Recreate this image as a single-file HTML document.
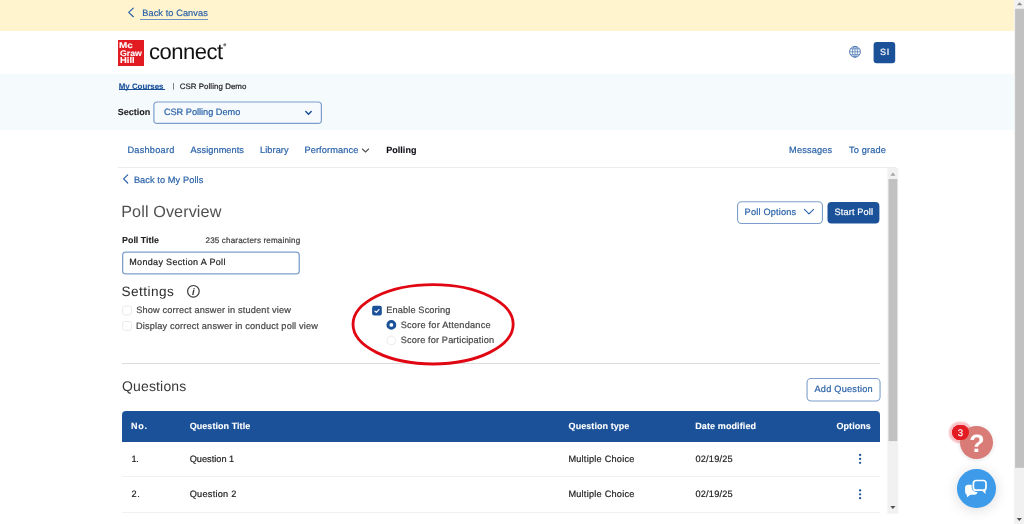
<!DOCTYPE html>
<html lang="en">
<head>
<meta charset="utf-8">
<title>Poll Overview - Connect</title>
<style>
html,body{margin:0;padding:0}
body{width:1024px;height:524px;overflow:hidden;background:#fff;position:relative;
  font-family:"Liberation Sans",Arial,sans-serif;-webkit-font-smoothing:antialiased;text-rendering:geometricPrecision;will-change:transform}
.abs,.t,svg.i{position:absolute}
.t{line-height:1;white-space:nowrap;margin:0;padding:0;font-weight:400;-webkit-text-stroke:0.2px currentColor}
a.t{text-decoration:none}
h1.t,h2.t,#t_con{font-weight:400;-webkit-text-stroke:0}
svg.i{overflow:visible}

/* page bands */
#banner{left:0;top:0;width:1014px;height:31px;background:#fff4ce}
#subhead{left:0;top:74px;width:1014px;height:56px;background:#f5fafd}
#back_ul{left:140px;top:19px;width:68px;height:1px;background:#6b93c2}
#myc_ul{left:119px;top:89px;width:46px;height:1px;background:#1a5199}

/* logo */
#mh{left:118px;top:40px;width:26px;height:26px;background:#e21b23}

/* rules */
#navline{left:118px;top:167px;width:778px;height:1px;background:#ececec}
#hr{left:122px;top:363px;width:758px;height:1px;background:#dcdcdc}

/* table */
#thead{left:122px;top:411px;width:758px;height:31px;background:#1a5199;border-radius:4px 4px 0 0}
.sep{left:122px;width:758px;height:1px;background:#eff1f4}
#sep1{top:476px}
#sep2{top:512px}

/* floating help */
#help{left:959.5px;top:425.7px;width:33.7px;height:33.7px;border-radius:50%;background:#d97b76;box-shadow:0 1px 4px rgba(0,0,0,.12)}
#badge_halo{left:951.6px;top:424.7px;width:17.8px;height:15.4px;border-radius:7.7px;background:#e31b23;box-shadow:0 0 1.5px 3.2px rgba(232,60,70,.32)}
#badge{left:951.6px;top:424.7px;width:17.8px;height:15.4px;border-radius:7.7px;background:#e31b23}
#chat{left:957.1px;top:469.1px;width:38.5px;height:38.5px;border-radius:50%;background:#3d9be9;box-shadow:0 2px 14px rgba(0,0,0,.14)}

#t_back{left:142.28px;top:9.00px;font-size:9.2px;letter-spacing:0.092px;color:#2a62a8}
#t_myc{left:118.75px;top:82.90px;font-size:7.9px;font-weight:700;-webkit-text-stroke:0.1px currentColor;color:#1a5199}
#t_bar{left:172.40px;top:84.00px;font-size:6.6px;color:#555}
#t_crumb{left:179.65px;top:82.90px;font-size:7.9px;letter-spacing:0.065px;color:#222222}
#t_sec{left:117.75px;top:108.20px;font-size:9.0px;font-weight:700;-webkit-text-stroke:0.1px currentColor;color:#222}
#t_sel{left:163.88px;top:108.20px;font-size:9.2px;letter-spacing:-0.008px;color:#2a62a8}
#t_n1{left:127.38px;top:145.80px;font-size:9.2px;letter-spacing:0.253px;color:#2a62a8}
#t_n2{left:190.62px;top:145.80px;font-size:9.2px;letter-spacing:0.075px;color:#2a62a8}
#t_n3{left:259.98px;top:145.80px;font-size:9.2px;letter-spacing:0.087px;color:#2a62a8}
#t_n4{left:304.38px;top:145.80px;font-size:9.2px;letter-spacing:0.135px;color:#2a62a8}
#t_n5{left:386.25px;top:145.80px;font-size:9.0px;letter-spacing:0.025px;font-weight:700;-webkit-text-stroke:0.1px currentColor;color:#0c0c16}
#t_n6{left:789.12px;top:145.80px;font-size:9.2px;letter-spacing:0.164px;color:#2a62a8}
#t_n7{left:848.98px;top:145.80px;font-size:9.2px;letter-spacing:0.161px;color:#2a62a8}
#t_bmp{left:133.88px;top:175.50px;font-size:9.2px;letter-spacing:0.100px;color:#2a62a8}
#t_h1{left:121.22px;top:204.00px;font-size:16.2px;letter-spacing:0.098px;color:#505050}
#t_po{left:744.62px;top:208.10px;font-size:9.2px;letter-spacing:0.184px;color:#2a62a8}
#t_sp{left:834.62px;top:208.10px;font-size:9.2px;letter-spacing:0.125px;color:#fff}
#t_pt{left:122.10px;top:236.30px;font-size:8.8px;letter-spacing:0.028px;font-weight:700;-webkit-text-stroke:0.1px currentColor;color:#222}
#t_rem{left:205.50px;top:236.80px;font-size:8.1px;letter-spacing:0.145px;color:#3c3c3c}
#t_inp{left:129.28px;top:258.00px;font-size:9.0px;letter-spacing:0.330px;color:#222222}
#t_set{left:121.38px;top:285.30px;font-size:13.6px;letter-spacing:0.471px;color:#2d2d2d}
#t_i{left:191.97px;top:286.80px;font-size:9.4px;font-style:italic;font-weight:700;-webkit-text-stroke:0.1px currentColor;color:#3a3a3a}
#t_c1{left:136.22px;top:306.40px;font-size:9.2px;letter-spacing:0.165px;color:#444}
#t_c2{left:135.97px;top:321.70px;font-size:9.2px;letter-spacing:0.161px;color:#444}
#t_es{left:386.27px;top:306.40px;font-size:9.2px;letter-spacing:0.135px;color:#444}
#t_r1{left:400.73px;top:321.00px;font-size:9.2px;letter-spacing:0.212px;color:#444}
#t_r2{left:400.73px;top:336.20px;font-size:9.2px;letter-spacing:0.132px;color:#444}
#t_q{left:121.97px;top:379.00px;font-size:14.0px;letter-spacing:0.159px;color:#383838}
#t_aq{left:814.52px;top:385.30px;font-size:9.2px;letter-spacing:0.225px;color:#2a62a8}
#t_th1{left:131.10px;top:422.00px;font-size:9.0px;letter-spacing:0.650px;font-weight:700;-webkit-text-stroke:0.1px currentColor;color:#fff}
#t_th2{left:189.72px;top:422.00px;font-size:9.0px;letter-spacing:0.050px;font-weight:700;-webkit-text-stroke:0.1px currentColor;color:#fff}
#t_th3{left:568.62px;top:422.00px;font-size:9.0px;letter-spacing:0.060px;font-weight:700;-webkit-text-stroke:0.1px currentColor;color:#fff}
#t_th4{left:695.25px;top:422.00px;font-size:9.0px;letter-spacing:0.104px;font-weight:700;-webkit-text-stroke:0.1px currentColor;color:#fff}
#t_th5{left:836.52px;top:422.00px;font-size:9.0px;letter-spacing:0.054px;font-weight:700;-webkit-text-stroke:0.1px currentColor;color:#fff}
#t_a1{left:131.38px;top:454.80px;font-size:9.2px;letter-spacing:-0.175px;color:#222222}
#t_a2{left:189.72px;top:454.80px;font-size:9.2px;letter-spacing:0.006px;color:#222222}
#t_a3{left:568.38px;top:454.80px;font-size:9.2px;letter-spacing:0.230px;color:#222222}
#t_a4{left:695.50px;top:454.80px;font-size:9.2px;letter-spacing:0.200px;color:#222222}
#t_b1{left:131.62px;top:489.90px;font-size:9.2px;letter-spacing:0.475px;color:#222222}
#t_b2{left:189.72px;top:489.90px;font-size:9.2px;letter-spacing:0.239px;color:#222222}
#t_b3{left:568.38px;top:489.90px;font-size:9.2px;letter-spacing:0.230px;color:#222222}
#t_b4{left:695.50px;top:489.90px;font-size:9.2px;letter-spacing:0.200px;color:#222222}
#t_mc{left:119.39px;top:41.90px;font-size:8.2px;transform-origin:0 50%;transform:scaleX(1.214);font-weight:700;-webkit-text-stroke:0.1px currentColor;color:#fff}
#t_graw{left:119.73px;top:49.60px;font-size:8.2px;transform-origin:0 50%;transform:scaleX(1.067);font-weight:700;-webkit-text-stroke:0.1px currentColor;color:#fff}
#t_hill{left:119.63px;top:57.20px;font-size:8.2px;transform-origin:0 50%;transform:scaleX(1.149);font-weight:700;-webkit-text-stroke:0.1px currentColor;color:#fff}
#t_con{left:148.93px;top:41.00px;font-size:22.0px;letter-spacing:-0.483px;color:#111}
#t_reg{left:223.60px;top:44.00px;font-size:3.6px;color:#555}
#t_si{left:880.12px;top:48.00px;font-size:9.0px;letter-spacing:0.625px;color:#fff}
#t_3{left:957.65px;top:429.00px;font-size:9.6px;color:#fff}
#t_qm{left:969.17px;top:432.00px;font-size:25.0px;font-weight:700;-webkit-text-stroke:0.1px currentColor;color:#fff}
</style>
</head>
<body>

<!-- top banner -->
<div id="banner" class="abs"></div>
<svg class="i" style="left:0;top:0" width="1024" height="31" viewBox="0 0 1024 31"><path d="M133.3 8.1 L128.7 12.4 L133.3 16.7" fill="none" stroke="#2a62a8" stroke-width="1.25" stroke-linecap="round" stroke-linejoin="round"/></svg>
<a id="t_back" class="t">Back to Canvas</a>
<div id="back_ul" class="abs"></div>

<!-- header -->
<header>
  <div id="mh" class="abs"></div>
  <span id="t_mc" class="t">Mc</span>
  <span id="t_graw" class="t">Graw</span>
  <span id="t_hill" class="t">Hill</span>
  <span id="t_con" class="t">connect</span>
  <span id="t_reg" class="t">&reg;</span>
  <svg class="i" style="left:849px;top:46px" width="12" height="12" viewBox="0 0 12 12" fill="none" stroke="#3f6eb0" stroke-width="0.7">
    <circle cx="6" cy="5.8" r="5.4" stroke-width="0.9"/>
    <ellipse cx="6" cy="5.8" rx="2.5" ry="5.4"/>
    <path d="M6 .4V11.2M.6 5.8H11.4M1.6 2.9H10.4M1.6 8.7H10.4"/>
  </svg>
  <svg class="i" style="left:870px;top:40px" width="28" height="26" viewBox="870 40 28 26"><rect x="873.60" y="42.10" width="21.60" height="21.10" rx="3" fill="#1a5199"/></svg>
  <span id="t_si" class="t">SI</span>
</header>

<!-- course bar -->
<section>
  <div id="subhead" class="abs"></div>
  <a id="t_myc" class="t">My Courses</a>
  <div id="myc_ul" class="abs"></div>
  <span id="t_bar" class="t">|</span>
  <span id="t_crumb" class="t">CSR Polling Demo</span>
  <label id="t_sec" class="t">Section</label>
  <svg class="i" style="left:150px;top:99px" width="176" height="28" viewBox="150 99 176 28"><rect x="153.90" y="102.00" width="167.50" height="21.40" rx="3.2" fill="#f7fafd" stroke="#7d9ecb" stroke-width="1.2"/></svg>
  <span id="t_sel" class="t">CSR Polling Demo</span>
  <svg class="i" style="left:0;top:100px" width="400" height="30" viewBox="0 100 400 30"><path d="M305.8 111.5 L308.5 114.2 L311.2 111.5" fill="none" stroke="#1a5199" stroke-width="1.5" stroke-linecap="round" stroke-linejoin="round"/></svg>
</section>

<!-- nav -->
<nav>
  <a id="t_n1" class="t">Dashboard</a>
  <a id="t_n2" class="t">Assignments</a>
  <a id="t_n3" class="t">Library</a>
  <a id="t_n4" class="t">Performance</a>
  <svg class="i" style="left:360px;top:145px" width="12" height="10" viewBox="360 145 12 10"><path d="M362.4 149 L365.5 152 L368.6 149" fill="none" stroke="#555" stroke-width="1.1" stroke-linecap="round" stroke-linejoin="round"/></svg>
  <a id="t_n5" class="t">Polling</a>
  <a id="t_n6" class="t">Messages</a>
  <a id="t_n7" class="t">To grade</a>
  <div id="navline" class="abs"></div>
</nav>

<!-- main -->
<main>
  <svg class="i" style="left:120px;top:172px" width="12" height="14" viewBox="120 172 12 14"><path d="M127.7 174.8 L123.6 178.9 L127.7 183" fill="none" stroke="#2a62a8" stroke-width="1.2" stroke-linecap="round" stroke-linejoin="round"/></svg>
  <a id="t_bmp" class="t">Back to My Polls</a>
  <h1 id="t_h1" class="t">Poll Overview</h1>

  <svg class="i" style="left:734px;top:198px" width="92" height="29" viewBox="734 198 92 29"><rect x="737.55" y="201.75" width="84.90" height="21.70" rx="4" fill="#fff" stroke="#7d9ecb" stroke-width="1.1"/></svg>
  <span id="t_po" class="t">Poll Options</span>
  <svg class="i" style="left:800px;top:205px" width="20" height="14" viewBox="800 205 20 14"><path d="M804.4 209.4 L809 213.8 L813.6 209.4" fill="none" stroke="#2a62a8" stroke-width="1.1" stroke-linecap="round" stroke-linejoin="round"/></svg>
  <svg class="i" style="left:824px;top:198px" width="60" height="29" viewBox="824 198 60 29"><rect x="827.50" y="202.00" width="51.90" height="21.50" rx="4" fill="#1a5199"/></svg>
  <span id="t_sp" class="t">Start Poll</span>

  <label id="t_pt" class="t">Poll Title</label>
  <span id="t_rem" class="t">235 characters remaining</span>
  <svg class="i" style="left:119px;top:249px" width="184" height="28" viewBox="119 249 184 28"><rect x="122.65" y="252.05" width="176.60" height="21.80" rx="3.2" fill="#fff" stroke="#7d9ecb" stroke-width="1.3"/></svg>
  <span id="t_inp" class="t">Monday Section A Poll</span>

  <h2 id="t_set" class="t">Settings</h2>
  <svg class="i" style="left:186px;top:284px" width="15" height="15" viewBox="186 284 15 15">
    <circle cx="193.4" cy="291.3" r="5.8" fill="none" stroke="#3a3a3a" stroke-width="1.2"/>
  </svg>
  <span id="t_i" class="t">i</span>
  <svg class="i" style="left:120px;top:303px" width="14" height="14" viewBox="120 303 14 14"><rect x="122.70" y="306.10" width="8.80" height="8.80" rx="2" fill="#fff" stroke="#e7e9ed" stroke-width="1"/></svg>
  <label id="t_c1" class="t">Show correct answer in student view</label>
  <svg class="i" style="left:120px;top:319px" width="14" height="14" viewBox="120 319 14 14"><rect x="122.70" y="321.50" width="8.80" height="8.80" rx="2" fill="#fff" stroke="#e7e9ed" stroke-width="1"/></svg>
  <label id="t_c2" class="t">Display correct answer in conduct poll view</label>

  <svg class="i" style="left:370px;top:303px" width="14" height="14" viewBox="370 303 14 14"><rect x="372.10" y="305.70" width="9.70" height="9.70" rx="2" fill="#1a5199"/></svg>
  <svg class="i" style="left:372px;top:305.6px" width="10" height="10" viewBox="0 0 10 10"><path d="M2.9 5.1 L4.3 6.4 L7 3.6" fill="none" stroke="#fff" stroke-width="1.2" stroke-linecap="round" stroke-linejoin="round"/></svg>
  <label id="t_es" class="t">Enable Scoring</label>
  <svg class="i" style="left:384px;top:317px" width="14" height="14" viewBox="384 317 14 14"><circle cx="391.35" cy="324.9" r="3.4" fill="#fff" stroke="#1a5199" stroke-width="3"/></svg>
  <label id="t_r1" class="t">Score for Attendance</label>
  <svg class="i" style="left:384px;top:333px" width="14" height="14" viewBox="384 333 14 14"><circle cx="391.35" cy="340.4" r="4.4" fill="#fff" stroke="#e7e9ed" stroke-width="1"/></svg>
  <label id="t_r2" class="t">Score for Participation</label>

  <div id="hr" class="abs"></div>
  <svg class="i" style="left:340px;top:275px" width="190" height="100" viewBox="340 275 190 100"><ellipse cx="433.1" cy="324.3" rx="80.1" ry="39.7" fill="none" stroke="#e00612" stroke-width="2.8"/></svg>

  <h2 id="t_q" class="t">Questions</h2>
  <svg class="i" style="left:803px;top:375px" width="82" height="30" viewBox="803 375 82 30"><rect x="807.05" y="378.55" width="73.00" height="22.50" rx="4" fill="#fff" stroke="#7d9ecb" stroke-width="1.1"/></svg>
  <span id="t_aq" class="t">Add Question</span>

  <div id="thead" class="abs"></div>
  <span id="t_th1" class="t">No.</span>
  <span id="t_th2" class="t">Question Title</span>
  <span id="t_th3" class="t">Question type</span>
  <span id="t_th4" class="t">Date modified</span>
  <span id="t_th5" class="t">Options</span>

  <span id="t_a1" class="t">1.</span>
  <span id="t_a2" class="t">Question 1</span>
  <span id="t_a3" class="t">Multiple Choice</span>
  <span id="t_a4" class="t">02/19/25</span>
  <svg class="i" style="left:856px;top:452px" width="8" height="14" viewBox="856 452 8 14" fill="#1a5199"><circle cx="860.1" cy="455" r="1.15"/><circle cx="860.1" cy="458.9" r="1.15"/><circle cx="860.1" cy="462.8" r="1.15"/></svg>
  <div id="sep1" class="abs sep"></div>

  <span id="t_b1" class="t">2.</span>
  <span id="t_b2" class="t">Question 2</span>
  <span id="t_b3" class="t">Multiple Choice</span>
  <span id="t_b4" class="t">02/19/25</span>
  <svg class="i" style="left:856px;top:487px" width="8" height="14" viewBox="856 487 8 14" fill="#1a5199"><circle cx="860.1" cy="490.4" r="1.15"/><circle cx="860.1" cy="494.3" r="1.15"/><circle cx="860.1" cy="498.2" r="1.15"/></svg>
  <div id="sep2" class="abs sep"></div>
</main>

<!-- inner scrollbar -->
<svg class="i" style="left:886px;top:166px" width="14" height="350" viewBox="886 166 14 350">
  <rect x="887.3" y="167.8" width="10.9" height="345.9" fill="#f1f1f1"/>
  <rect x="888.5" y="179" width="8.8" height="262.1" fill="#c1c1c1"/>
  <path d="M890.4 175.7 L892.9 172.6 L895.4 175.7Z" fill="#a3a3a3"/>
  <path d="M890.3 505.9 L892.9 509 L895.5 505.9Z" fill="#505050"/>
</svg>

<!-- outer scrollbar -->
<svg class="i" style="left:1012px;top:0" width="12" height="524" viewBox="1012 0 12 524">
  <rect x="1014.1" y="0" width="9.9" height="524" fill="#f1f1f1"/>
  <rect x="1015.1" y="8.8" width="8.9" height="459" fill="#c1c1c1"/>
  <path d="M1016.9 5.3 L1019.6 2.2 L1022.3 5.3Z" fill="#8c8c8c"/>
  <path d="M1016.7 517.9 L1019.3 521 L1021.9 517.9Z" fill="#505050"/>
</svg>

<!-- floating help widgets -->
<aside>
  <div id="badge_halo" class="abs"></div>
  <div id="help" class="abs"></div>
  <span id="t_qm" class="t">?</span>
  <div id="badge" class="abs"></div>
  <span id="t_3" class="t">3</span>
  <div id="chat" class="abs"></div>
  <svg class="i" style="left:957px;top:469px" width="40" height="40" viewBox="957 469 40 40">
    <rect x="965.1" y="484.8" width="12.3" height="9.9" rx="3" fill="#fff"/>
    <path d="M966.4 493 L967.1 497.3 L971 494.3Z" fill="#fff"/>
    <rect x="973.4" y="480.5" width="12.6" height="9.7" rx="2.8" fill="#3d9be9" stroke="#3d9be9" stroke-width="3.4"/>
    <path d="M981.2 490 L985.6 494 L985.4 489.6Z" fill="#fff"/>
    <rect x="973.4" y="480.5" width="12.6" height="9.7" rx="2.8" fill="#3d9be9" stroke="#fff" stroke-width="1.7"/>
  </svg>
</aside>

</body>
</html>
